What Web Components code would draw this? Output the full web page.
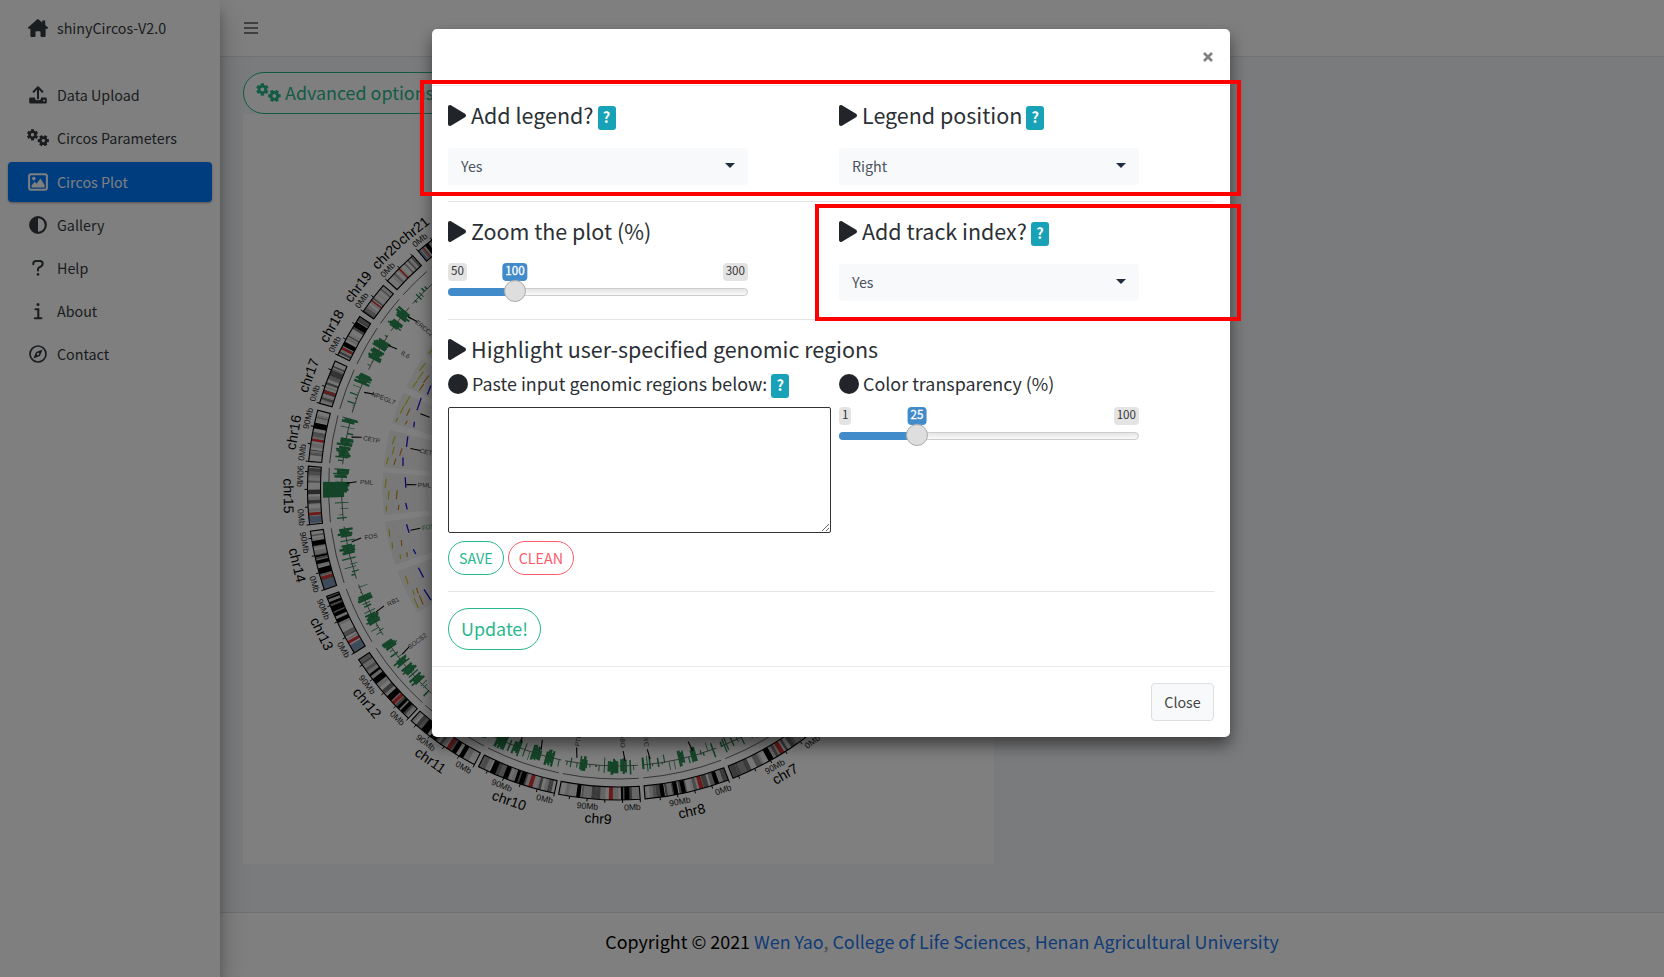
<!DOCTYPE html>
<html lang="en">
<head>
<meta charset="utf-8">
<title>shinyCircos-V2.0</title>
<style>
html,body{margin:0;height:100%;overflow:hidden}
body{font-family:"Noto Sans CJK SC","Source Sans Pro",sans-serif;color:#2b3035;font-size:14.3px;line-height:1.5}
</style>
</head>
<body>
<circos-app></circos-app>
<script>
const define=(name,css,html,after)=>{
  const t=document.createElement('template');
  t.innerHTML=`<style>:host{display:block;box-sizing:border-box}*{box-sizing:border-box}${css}</style>${html}`;
  customElements.define(name,class extends HTMLElement{
    constructor(){super();this.attachShadow({mode:'open'}).append(t.content.cloneNode(true));}
    connectedCallback(){if(after&&!this.done){this.done=true;after(this,this.shadowRoot);}}
  });
};

/* icons */
const gear=(cx,cy,r,w,off)=>{
  let s=`<circle cx="${cx}" cy="${cy}" r="${r}" fill="none" stroke="currentColor" stroke-width="${w}"/>`;
  for(let i=0;i<6;i++){const a=(i*60+off)*Math.PI/180,p=q=>`${(cx+q*Math.cos(a)).toFixed(2)} ${(cy+q*Math.sin(a)).toFixed(2)}`;
    s+=`<path d="M${p(r)}L${p(r+2.6)}" stroke="currentColor" stroke-width="3"/>`;}
  return s;
};
const ICONS={
  home:['0 0 20 18','<path fill="currentColor" d="M10 .1 20 8.6q.3.9-.6 1.1H17.600v7.200q0 1-1 1h-3.100q-1 0-1-1v-3.600q0-1-1-1h-3q-1 0-1 1v3.600q0 1-1 1h-3.100q-1 0-1-1V9.700H.6Q-.3 9.500 0 8.600L9 .5q1-.8 2 0z"/><path fill="currentColor" d="M14.200 1.500h3v6h-3z"/>'],
  upload:['0 0 18 18','<path d="M9 12.500V1.500M4.600 5.700 9 1.300l4.400 4.400" fill="none" stroke="currentColor" stroke-width="2" stroke-linecap="round" stroke-linejoin="round"/><path fill="currentColor" fill-rule="evenodd" d="M1.500 11.500H6v1.300q.3 1.500 3 1.500t3-1.500v-1.300h4.500q1.300 0 1.300 1.300v3.400q0 1.300-1.300 1.300h-15Q.2 17.500.2 16.200v-3.400q0-1.300 1.300-1.300zM15 13.700a.9.9 0 1 0 .01 0z"/>'],
  gears:['0 0 22 18',gear(5.500,5.800,3,2.600,30)+gear(16.300,11.600,3,2.600,0)],
  image:['0 0 20 18','<rect x="1.100" y="1.300" width="17.800" height="15.400" rx="2" fill="none" stroke="currentColor" stroke-width="2"/><circle cx="5.800" cy="5.600" r="1.800" fill="currentColor"/><path fill="currentColor" d="M3.600 14.600v-2.200l3-3.600 2 2 3.800-5.200 4.200 6.400v2.600z"/>'],
  contrast:['0 0 18 18','<circle cx="9" cy="9" r="7.800" fill="none" stroke="currentColor" stroke-width="2.200"/><path d="M9 1.200v15.600A7.800 7.800 0 0 1 9 1.200z" fill="currentColor"/>'],
  help:['0 0 18 18','<path d="M4.300 5.300V4.600Q4.300 1.900 7 1.900h4Q13.700 1.900 13.700 4.500q0 1.800-1.600 2.800L9.900 8.700Q9 9.300 9 10.400v1.100" fill="none" stroke="currentColor" stroke-width="2" stroke-linecap="round"/><circle cx="9" cy="15.400" r="1.300" fill="currentColor"/>'],
  info:['0 0 18 18','<circle cx="9" cy="2.500" r="1.500" fill="currentColor"/><path d="M6.500 7.300H9.300V16M5.900 16.300H12.400" fill="none" stroke="currentColor" stroke-width="2.100" stroke-linecap="round"/>'],
  compass:['0 0 18 18','<circle cx="9" cy="9" r="8" fill="none" stroke="currentColor" stroke-width="1.700"/><path fill="currentColor" fill-rule="evenodd" d="M13.600 4.400 11.300 10.200Q11 11 10.200 11.300L4.400 13.600 6.700 7.800Q7 7 7.800 6.700zM9 7.800a1.200 1.200 0 1 0 .01 0z"/>'],
  bars:['0 0 14 12','<path d="M0 1h14M0 6h14M0 11h14" stroke="currentColor" stroke-width="1.700"/>'],
  play:['0 0 448 512','<path fill="currentColor" d="M424.400 214.700L72.400 6.600C43.800-10.300 0 6.100 0 47.900V464c0 37.500 40.700 60.100 72.400 41.300l352-208c31.400-18.500 31.500-64.100 0-82.600z"/>'],
  circle:['0 0 20 20','<circle cx="10" cy="10" r="10" fill="currentColor"/>'],
  close:['0 0 10 10','<path d="M1 1l8 8M9 1l-8 8" stroke="currentColor" stroke-width="2.600"/>']
};
define('x-icon',':host{display:inline-flex;flex:none}svg{display:block;width:100%;height:100%}','<svg aria-hidden="true"></svg>',(el,r)=>{
  const [vb,body]=ICONS[el.getAttribute('name')],s=r.querySelector('svg');
  s.setAttribute('viewBox',vb);s.innerHTML=body;
  if(el.getAttribute('name')==='play')s.setAttribute('preserveAspectRatio','none');
  el.style.width=el.getAttribute('w')+'px';el.style.height=el.getAttribute('h')+'px';
});

/* sidebar */
define('nav-link',`:host{height:40px;margin-bottom:3px;padding-left:16px;display:flex;align-items:center;color:#343a40;border-radius:4px}
:host([active]){margin-top:4px;background:#007bff;color:#fff;box-shadow:0 1px 3px rgba(0,0,0,.12),0 1px 2px rgba(0,0,0,.24)}
i{width:27px;display:flex;justify-content:center;margin-right:6px}span{white-space:nowrap}`,
'<i></i><span><slot></slot></span>',(el,r)=>{
  r.querySelector('i').innerHTML=`<x-icon name="${el.getAttribute('icon')}" w="${el.getAttribute('w')||18}" h="18"></x-icon>`;
});
define('side-bar',`:host{width:220px;height:977px;background:#fff;box-shadow:0 14px 28px rgba(0,0,0,.25),0 10px 10px rgba(0,0,0,.22);position:relative;z-index:2;padding:0 8px}
.brand{height:56px;display:flex;align-items:center;padding-left:20px;gap:9px;margin-bottom:19px;color:#343a40}`,
`<div class="brand"><x-icon name="home" w="20" h="18"></x-icon><span>shinyCircos-V2.0</span></div>
<nav-link icon="upload">Data Upload</nav-link>
<nav-link icon="gears" w="22">Circos Parameters</nav-link>
<nav-link icon="image" w="20" active>Circos Plot</nav-link>
<nav-link icon="contrast">Gallery</nav-link>
<nav-link icon="help">Help</nav-link>
<nav-link icon="info">About</nav-link>
<nav-link icon="compass">Contact</nav-link>`);

define('pill-button',`:host{display:inline-flex;align-items:center;justify-content:center;border:1px solid var(--c,#28b78d);color:var(--c,#28b78d);border-radius:30px;height:42px;padding:0 12px;font-size:17.900px;line-height:1;white-space:nowrap;gap:4px;background:#fff}
:host([small]){height:34px;padding:0 10px;font-size:14.300px}`,'<slot></slot>');

/* chromosome wheel */
const CHR=[ // name, start, end, red, blue end cap, dark bands [pos,width], has 90Mb
 ['chr7',51,68.4,.41,0,[[.55,.06],[.1,.05]],1],
 ['chr8',69.3,85.1,.33,0,[[.14,.05],[.54,.05],[.63,.05],[.79,.05]],1],
 ['chr9',86,101.1,.36,0,[[.16,.06],[.22,.03],[.76,.05]],1],
 ['chr10',101.900,116.750,.31,0,[[.43,.06],[.5,.04],[.64,.06],[.81,.07]],1],
 ['chr11',117.600,131.800,.4,0,[[.31,.06],[.2,.06],[.64,.09],[.78,.1]],1],
 ['chr12',132.500,146.700,.28,0,[[.36,.08],[.19,.04],[.12,.05],[.65,.08],[.75,.03]],1],
 ['chr13',148.200,159.800,.19,1,[[.78,.09],[.68,.06],[.57,.06],[.88,.04],[.96,.03]],1],
 ['chr14',161.100,172.200,.2,1,[[.32,.1],[.47,.06],[.57,.03],[.79,.08]],1],
 ['chr15',173.400,184.200,.18,1,[],1],
 ['chr16',185.100,194.700,.42,0,[[.7,.11]],1],
 ['chr17',196,204.300,.28,0,[],0],
 ['chr18',205.500,213.700,.18,0,[[.29,.1],[.8,.13]],0],
 ['chr19',214.800,220.900,.42,0,[],0],
 ['chr20',222,228.600,.47,0,[],0],
 ['chr21',229.900,233.500,.3,1,[[.55,.2]],0]];
const GENES=[['ERCC2',219.300,0],['IL6',211.900,0],['NPEGL7',200.800,3],['CETP',191,1],['PML',181.200,1],['FOS',168.800,2],['RB1',153.100,0],['SOCS2',142.600,0],['',133,0],
 ['',111,0],['',106.500,0],['PTEN',98.800,0],['ABO',88.600,0],['MYC',83.300,0],['',74.200,0]];
define('circos-plot',`:host{width:751px;height:750px;background:#fff}svg{display:block;width:751px;height:750px}text{font-family:"Liberation Sans",sans-serif;text-anchor:middle;dominant-baseline:central}`,'<svg viewBox="243 114 751 750"></svg>',(el,root)=>{
  let seed=11;const rnd=()=>(seed=(seed*16807)%2147483647)/2147483647;
  const P=(r,a)=>{a*=Math.PI/180;return `${(618.5+r*Math.cos(a)).toFixed(1)} ${(489+r*Math.sin(a)).toFixed(1)}`;};
  const seg=(a,b,r1,r2,f,x='')=>`<path d="M${P(r1,a)}A${r1} ${r1} 0 0 1 ${P(r1,b)}L${P(r2,b)}A${r2} ${r2} 0 0 0 ${P(r2,a)}Z" fill="${f}" ${x}/>`;
  const arc=(a,b,r,c,w)=>`<path d="M${P(r,a)}A${r} ${r} 0 0 1 ${P(r,b)}" fill="none" stroke="${c}" stroke-width="${w}"/>`;
  const txt=(s,r,a,size,fill='#000')=>{const [x,y]=P(r,a).split(' ');return `<text x="${x}" y="${y}" font-size="${size}" fill="${fill}" transform="rotate(${a<185?a-90:a+90} ${x} ${y})">${s}</text>`;};
  const rad=(s,r,a,size,fill)=>{const [x,y]=P(r,a).split(' ');return `<text x="${x}" y="${y}" font-size="${size}" fill="${fill}" transform="rotate(${a>90?a-180:a} ${x} ${y})">${s}</text>`;};
  let o='';
  for(const [n,a,b,red,blue,dark,m90] of CHR){
    const L=b-a,at=f=>a+L*f;
    o+=seg(a,b,311,298,'#e4e4e4');
    let f=0;const g=['#eee','#c8c8c8','#999','#eee','#ccc','#777','#ddd'];
    while(f<1){const w=.02+rnd()*.045;o+=seg(at(f),at(Math.min(1,f+w)),311,298,g[Math.floor(rnd()*g.length)]);f+=w;}
    if(n==='chr15')o+=seg(at(.52),at(.6),311,298,'#555')+seg(at(.36),at(.42),311,298,'#666');
    if(n==='chr17')o+=seg(at(.66),at(.79),311,298,'#666');
    for(const [p,w] of dark)o+=seg(at(p-w/2),at(p+w/2),311,298,'#000');
    if(blue)o+=seg(at(.02),at(.14),311,298,'#8095bb');
    o+=seg(at(red-.025),at(red+.025),311,298,'#d93434');
    o+=seg(a,b,311,298,'none','stroke="#000" stroke-width="1.1"');
    for(let t=a;t<b;t+=3.26)o+=`<path d="M${P(311,t)}L${P(314,t)}" stroke="#000"/>`;
    o+=txt(n,330,(n==='chr21'?231.600:(a+b)/2),14)+txt('0Mb',318.500,a+1.500,8.600,'#222');
    if(m90)o+=txt('90Mb',318.500,a+Math.min(9.600,L-1.900),8.600,'#222');
    o+=arc(a,b,290,'#444',.8)+arc(a,b,277,'#444',.8);
    let t=a+.2+rnd()*.8;
    while(t<b-.4){
      const kind=rnd();
      if(kind<.3){ // dense cluster
        const end=Math.min(b-.1,t+1+rnd()*1.200);
        while(t<end){const w=.2+rnd()*.3;o+=seg(t,Math.min(b,t+w+.06),277+4+rnd()*5,277-4-rnd()*5,'#26884f');t+=w;}
      }else{const w=.12+rnd()*.22,tall=rnd()<.5;o+=seg(t,t+w,277+(tall?3+rnd()*6:rnd()*3),277-(rnd()<.5?2+rnd()*7:0),'#26884f');t+=w;}
      t+=.2+rnd()*.9;
    }
    if(a>148){
      o+=seg(a+.2,b-.2,236,190,'#f0f0f0');
      for(let i=0;i<3;i++){const q=at(.1+i*.27),d=1+rnd()*1.800;
        const r1=(rnd()-.5)*6,r2=(rnd()-.5)*6;
        o+=`<path d="M${P(231+r1,q)}L${P(230+r1,q+d)}" stroke="#c8c414" stroke-width="1.1"/>`;
        if(i!=2)o+=`<path d="M${P(224+r2,q)}L${P(223+r2,q+d)}" stroke="#d07a18" stroke-width="1.1"/>`;
        if(i!=1)o+=`<path d="M${P(215+r2,q)}L${P(216+r2,q+d*1.3)}" stroke="#1a10d0" stroke-width="1.3"/>`;
      }
    }
  }
  o+=seg(178.300,181.400,295.500,274.500,'#26884f');
  for(const [s,a,k] of GENES){
    o+=`<path d="M${P(272,a)}L${P(262,a+.4)}" stroke="#000" stroke-width="1.1"/>`;
    if(s)o+=rad(s,252,a+.4,6.400,'#444');
    if(k)o+=`<path d="M${P(212,a)}L${P(202,a)}" stroke="#000" stroke-width="1.1"/>`;
    if(k==1||k==2)o+=rad(s,194,a,6.400,k===2?'#2ca24c':'#444');
  }
  root.querySelector('svg').innerHTML=o;
});

/* modal controls */
define('help-badge',`:host{display:inline-flex;width:18px;height:24px;border-radius:3px;background:#17a2b8;color:#fff;font:700 14.500px/24px "Noto Sans CJK SC",sans-serif;justify-content:center;flex:none;position:relative;top:2px}span{position:relative;top:-1px}`,'<span>?</span>');
define('field-title',`:host{display:flex;align-items:center;height:34px;font-size:21.480px;line-height:34px;white-space:nowrap}
:host([sub]){font-size:17.900px}x-icon{margin-right:5px;position:relative;top:-.5px;color:#212529}:host([sub]) x-icon{margin-right:4px}.t{position:relative;top:-1px}help-badge{margin-left:4px}`,'<x-icon name="play" w="18" h="21"></x-icon><span class="t"><slot></slot></span>',(el,r)=>{
  if(el.hasAttribute('sub')){
    const dot=document.createElement('x-icon');
    dot.setAttribute('name','circle');dot.setAttribute('w',20);dot.setAttribute('h',20);
    r.querySelector('x-icon').replaceWith(dot);
  }
  if(el.hasAttribute('help'))r.append(document.createElement('help-badge'));
});
define('select-box',`:host{display:flex;align-items:center;justify-content:space-between;width:300px;height:37px;background:#f8f9fa;border-radius:3px;padding:0 13px 0 13px;color:#4a5260}
b{border:5px solid transparent;border-top-color:#1f2d3d;border-bottom:0;position:relative;top:-1px}`,'<span><slot></slot></span><b></b>');
define('range-slider',`:host{width:300px;height:40px;position:relative}
.l{display:flex;justify-content:space-between}.l span,.v{font-size:11.600px;line-height:15.500px;height:18px;padding:0 3px;border-radius:4px;background:#e3e3e3;color:#333}
.line{height:8px;margin-top:7px;border:1px solid #ccc;border-radius:8px;background:linear-gradient(#e4e4e4,#fafafa)}
.bar{position:absolute;left:0;top:25px;height:8px;border-radius:8px 0 0 8px;background:#428bca}
.v{position:absolute;top:0;transform:translateX(-50%);background:#428bca;color:#fff;-webkit-text-stroke:.3px #fff}
.h{position:absolute;top:17px;width:22px;height:22px;margin-left:-11px;border-radius:50%;background:#dedede;border:1px solid #ababab;box-shadow:1px 1px 3px rgba(255,255,255,.3)}`,
'<div class="l"><span class="a"></span><span class="z"></span></div><div class="line"></div><div class="bar"></div><div class="v"></div><div class="h"></div>',(el,r)=>{
  const g=k=>el.getAttribute(k),x=g('at')+'px';
  r.querySelector('.a').textContent=g('min');r.querySelector('.z').textContent=g('max');r.querySelector('.v').textContent=g('value');
  r.querySelector('.bar').style.width=x;r.querySelector('.v').style.left=x;r.querySelector('.h').style.left=x;
});
define('options-modal',`:host{width:798px;height:708px;background:#fff;border-radius:5px;box-shadow:0 8px 16px rgba(0,0,0,.5);display:flex;flex-direction:column}
header{height:57px;border-bottom:1px solid #e9ecef;display:flex;justify-content:flex-end;align-items:center;padding-right:17px;color:#808080;flex:none}
.body{padding:0 16px;height:580px}
.row{display:grid;grid-template-columns:391px 1fr;border-bottom:1px solid #e2e4e6}
.cell{padding-top:13px}.r1{height:116px}.r2{height:118px}.r3{height:272px;border-bottom:1px solid #e2e4e6;padding-top:13px}
select-box{margin-top:14.500px}.r2 range-slider{margin-top:14px}
.split{display:grid;grid-template-columns:391px 1fr}
.split range-slider{margin-top:6px}
textarea{display:block;width:383px;height:126px;margin:6px 0 8px;border:1px solid #333;border-radius:2px;background:#fff;padding:2px}
.btns{display:flex;gap:4px}.up{padding-top:16px}
footer{border-top:1px solid #e9ecef;height:71px;display:flex;justify-content:flex-end;padding:16px 16px 0}
button{width:63px;height:38px;border:1px solid #dcdfe2;border-radius:4px;background:#f8f9fa;color:#444;font:inherit;padding:0}`,
`<header><x-icon name="close" w="10" h="10"></x-icon></header>
<div class="body">
 <div class="row r1"><div class="cell"><field-title help>Add legend?</field-title><select-box>Yes</select-box></div><div class="cell"><field-title help>Legend position</field-title><select-box>Right</select-box></div></div>
 <div class="row r2"><div class="cell"><field-title>Zoom the plot (%)</field-title><range-slider min="50" max="300" value="100" at="67"></range-slider></div><div class="cell"><field-title help>Add track index?</field-title><select-box>Yes</select-box></div></div>
 <div class="r3"><field-title>Highlight user-specified genomic regions</field-title>
  <div class="split"><div><field-title sub help>Paste input genomic regions below:</field-title><textarea></textarea><div class="btns"><pill-button small>SAVE</pill-button><pill-button small style="--c:#ff5a6c">CLEAN</pill-button></div></div>
  <div><field-title sub>Color transparency (%)</field-title><range-slider min="1" max="100" value="25" at="78"></range-slider></div></div></div>
 <div class="up"><pill-button>Update!</pill-button></div>
</div>
<footer><button>Close</button></footer>`);

define('page-footer',`:host{height:65px;background:#fff;border-top:1px solid #dee2e6;display:flex;justify-content:center;align-items:center;font-size:17.900px;color:#000;padding-bottom:8px}
a{color:#2277ee}i{font-style:normal;color:#869099}p{margin:0;white-space:pre}`,'<p>Copyright © 2021 <a>Wen Yao</a><i>, </i><a>College of Life Sciences</a><i>, </i><a>Henan Agricultural University</a></p>');

define('circos-app',`:host{width:1664px;height:977px;position:relative;overflow:hidden;display:flex}
main{flex:1;display:flex;flex-direction:column;background:#f4f6f9}
.top{height:57px;background:#fff;border-bottom:1px solid #dee2e6;padding:0 24px;color:#555;display:flex;align-items:center}
.content{flex:1;padding:15px 0 0 23px}.content pill-button{display:flex;width:210px;justify-content:flex-start}
.shade{position:absolute;inset:0;background:rgba(0,0,0,.5);z-index:3}
options-modal{position:absolute;left:432px;top:29px;z-index:4}
.mark{position:absolute;border:4px solid #f00;z-index:5}
.m1{left:420px;top:80px;width:821px;height:116px}.m2{left:815px;top:204px;width:426px;height:117px}`,
`<side-bar></side-bar>
<main><div class="top"><x-icon name="bars" w="14" h="12"></x-icon></div>
<div class="content"><pill-button><x-icon name="gears" w="25" h="20"></x-icon>Advanced options</pill-button><circos-plot></circos-plot></div>
<page-footer></page-footer></main>
<div class="shade"></div><options-modal></options-modal><div class="mark m1"></div><div class="mark m2"></div>`);
</script>
</body>
</html>
